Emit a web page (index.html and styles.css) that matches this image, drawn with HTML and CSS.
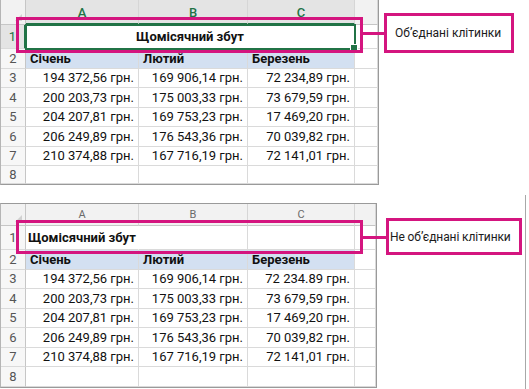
FILE: index.html
```html
<!DOCTYPE html>
<html lang="uk">
<head>
<meta charset="utf-8">
<title>Об’єднані клітинки</title>
<link rel="stylesheet" href="styles.css">
</head>
<body>
<main class="page">
  <section class="panel panel-top">
    <div class="sheet">
      <div class="corner"></div><div class="colh sel">A</div><div class="colh sel">B</div><div class="colh sel">C</div><div class="colh"></div>
      <div class="rowh sel">1</div><div class="cell merged">Щомісячний збут</div><div class="cell"></div>
      <div class="rowh">2</div><div class="cell hd">Січень</div><div class="cell hd">Лютий</div><div class="cell hd">Березень</div><div class="cell"></div>
      <div class="rowh">3</div><div class="cell num">194 372,56 грн.</div><div class="cell num">169 906,14 грн.</div><div class="cell num">72 234,89 грн.</div><div class="cell"></div>
      <div class="rowh">4</div><div class="cell num">200 203,73 грн.</div><div class="cell num">175 003,33 грн.</div><div class="cell num">73 679,59 грн.</div><div class="cell"></div>
      <div class="rowh">5</div><div class="cell num">204 207,81 грн.</div><div class="cell num">169 753,23 грн.</div><div class="cell num">17 469,20 грн.</div><div class="cell"></div>
      <div class="rowh">6</div><div class="cell num">206 249,89 грн.</div><div class="cell num">176 543,36 грн.</div><div class="cell num">70 039,82 грн.</div><div class="cell"></div>
      <div class="rowh">7</div><div class="cell num">210 374,88 грн.</div><div class="cell num">167 716,19 грн.</div><div class="cell num">72 141,01 грн.</div><div class="cell"></div>
      <div class="rowh">8</div><div class="cell"></div><div class="cell"></div><div class="cell"></div><div class="cell"></div>
    </div>
    <div class="highlight hl-top"></div>
    <div class="connector con-top"></div>
    <div class="label label-top">Об’єднані клітинки</div>
  </section>

  <section class="panel panel-bottom">
    <div class="sheet sheet-plain">
      <div class="corner"></div><div class="colh">A</div><div class="colh">B</div><div class="colh">C</div><div class="colh"></div>
      <div class="rowh">1</div><div class="cell title">Щомісячний збут</div><div class="cell"></div><div class="cell"></div><div class="cell"></div>
      <div class="rowh">2</div><div class="cell hd">Січень</div><div class="cell hd">Лютий</div><div class="cell hd">Березень</div><div class="cell"></div>
      <div class="rowh">3</div><div class="cell num">194 372,56 грн.</div><div class="cell num">169 906,14 грн.</div><div class="cell num">72 234.89 грн.</div><div class="cell"></div>
      <div class="rowh">4</div><div class="cell num">200 203,73 грн.</div><div class="cell num">175 003,33 грн.</div><div class="cell num">73 679,59 грн.</div><div class="cell"></div>
      <div class="rowh">5</div><div class="cell num">204 207,81 грн.</div><div class="cell num">169 753,23 грн.</div><div class="cell num">17 469,20 грн.</div><div class="cell"></div>
      <div class="rowh">6</div><div class="cell num">206 249,89 грн.</div><div class="cell num">176 543,36 грн.</div><div class="cell num">70 039,82 грн.</div><div class="cell"></div>
      <div class="rowh">7</div><div class="cell num">210 374,88 грн.</div><div class="cell num">167 716,19 грн.</div><div class="cell num">72 141,01 грн.</div><div class="cell"></div>
      <div class="rowh">8</div><div class="cell"></div><div class="cell"></div><div class="cell"></div><div class="cell"></div>
    </div>
    <div class="highlight hl-bottom"></div>
    <div class="connector con-bottom"></div>
    <div class="label label-bottom">Не об’єднані клітинки</div>
  </section>
</main>
</body>
</html>
```

FILE: styles.css
```css
* { box-sizing: border-box; }
html, body { margin: 0; padding: 0; background: #fff; }
body {
  width: 529px;
  height: 389px;
  overflow: hidden;
  font-family: Roboto, "Noto Sans", sans-serif;
  font-size: 13px;
  color: #1b1b1b;
}
.page { display: flex; flex-direction: column; }

.panel { position: relative; display: flex; align-items: flex-start; }
.panel-top { height: 195px; }
.panel-bottom { height: 194px; padding-top: 8px; border-right: 1px solid #a8a8a8; width: 526px; }

.sheet {
  display: grid;
  grid-template-columns: 25px 113px 109px 107px 23px;
  grid-template-rows: 25px 24px repeat(6, 19.5px) 18px;
  border-left: 1px solid #b5b5b5;
  border-right: 1px solid #9a9a9a;
  border-bottom: 1px solid #9a9a9a;
  width: 379px;
  flex: none;
}
.sheet-plain {
  grid-template-columns: 25px 113px 109px 107px 21px;
  grid-template-rows: 22px 24px repeat(6, 19.5px) 20px;
  border-top: 1px solid #9a9a9a;
  width: 377px;
}

.corner, .colh, .rowh, .cell {
  border-right: 1px solid #dadada;
  border-bottom: 1px solid #dadada;
  display: flex;
  align-items: center;
  white-space: nowrap;
  min-width: 0;
}
.corner {
  background: #f2f2f2;
  position: relative;
  border-bottom-color: #c6c6c6;
  border-right-color: #c6c6c6;
}
.corner::after {
  content: "";
  position: absolute;
  right: 3px;
  bottom: 3px;
  border-style: solid;
  border-width: 0 0 7px 7px;
  border-color: transparent transparent #d0d0d0 transparent;
}
.colh {
  background: #f2f2f2;
  justify-content: center;
  color: #6a6a6a;
  font-size: 11px;
  align-items: flex-end;
  padding-bottom: 4px;
  border-bottom-color: #c6c6c6;
  border-right-color: #d6d6d6;
}
.colh.sel {
  background: #e4e4e4;
  color: #217346;
  font-size: 13px;
  font-weight: 500;
  border-bottom: 2px solid #217346;
  padding-bottom: 3px;
}
.rowh {
  background: #f7f7f7;
  justify-content: center;
  color: #555;
  font-size: 13px;
  border-right-color: #c6c6c6;
}
.rowh.sel {
  background: #e4e4e4;
  color: #217346;
  border-right: 2px solid #217346;
}
.cell { padding: 0 4px; }
.num { justify-content: flex-end; color: #111; }
.hd {
  background: #d3e0f1;
  font-weight: 700;
  color: #111;
  padding-left: 4px;
}
.merged {
  grid-column: 2 / 5;
  justify-content: center;
  font-weight: 700;
  color: #111;
  position: relative;
  outline: 2px solid #217346;
  outline-offset: -1px;
}
.merged::after {
  content: "";
  position: absolute;
  right: -4px;
  bottom: -4px;
  width: 6px;
  height: 6px;
  background: #217346;
  border: 1px solid #fff;
}
.title {
  font-weight: 700;
  color: #111;
  overflow: visible;
  border-right-color: transparent;
  position: relative;
  z-index: 1;
  padding-left: 2px;
}

.highlight {
  position: absolute;
  border: 3px solid #d4157f;
}
.hl-top { left: 16px; top: 17px; width: 347px; height: 36px; }
.hl-bottom { left: 16px; top: 25px; width: 347px; height: 34px; }

.connector {
  position: absolute;
  height: 3px;
  background: #d4157f;
}
.con-top { left: 363px; width: 22px; top: 32px; }
.con-bottom { left: 363px; width: 24px; top: 41px; }

.label {
  border: 3px solid #d4157f;
  display: flex;
  align-items: center;
  color: #1b1b1b;
  font-size: 12px;
  white-space: nowrap;
  flex: none;
  overflow: hidden;
}
.label-top {
  margin-left: 5px;
  margin-top: 13px;
  width: 130px;
  height: 40px;
  padding-left: 8px;
}
.label-bottom {
  margin-left: 9px;
  margin-top: 15px;
  width: 136px;
  height: 37px;
  padding-left: 1px;
  letter-spacing: -0.1px;
}
```
